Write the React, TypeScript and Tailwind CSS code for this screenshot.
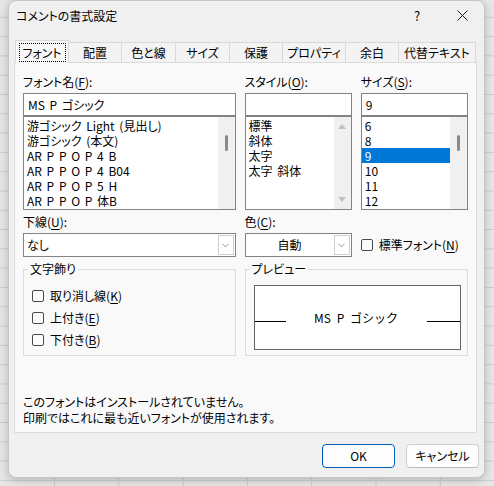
import { ChevronDown } from "lucide-react";

const tabs = [
  { label: "フォント", w: 54 },
  { label: "配置", w: 53 },
  { label: "色と線", w: 54 },
  { label: "サイズ", w: 54 },
  { label: "保護", w: 53 },
  { label: "プロパティ", w: 63 },
  { label: "余白", w: 53 },
  { label: "代替テキスト", w: 77 },
];

const fontNames = [
  "游ゴシック Light (見出し)",
  "游ゴシック (本文)",
  "AR P P O P 4 B",
  "AR P P O P 4 B04",
  "AR P P O P 5 H",
  "AR P P O P 体B",
];

const styles = ["標準", "斜体", "太字", "太字 斜体"];
const sizes = ["6", "8", "9", "10", "11", "12"];

function Key({ k }: { k: string }) {
  return <span className="underline underline-offset-[2px]">{k}</span>;
}

function Check({ children }: { children: React.ReactNode }) {
  return (
    <div className="flex items-center gap-[6px]">
      <span className="w-[12px] h-[12px] rounded-[2px] border border-[#4a4a4a] bg-[#fbfbfb]" />
      <span>{children}</span>
    </div>
  );
}

function Thumb() {
  return <div className="absolute left-[7px] top-[18px] w-[3px] h-[16px] rounded-full bg-[#8a8a8a]" />;
}

function ListBox({
  items,
  selected,
  thumb,
  arrows,
}: {
  items: string[];
  selected?: number;
  thumb?: boolean;
  arrows?: boolean;
}) {
  return (
    <div className="h-[94px] border border-[#838383] bg-white flex">
      <div className="flex-1 pt-[1px]">
        {items.map((it, i) => (
          <div
            key={it}
            className={`h-[15px] leading-[15px] pl-[3px] whitespace-nowrap [word-spacing:2px] ${
              i === selected ? "bg-[#0078d7] text-white" : ""
            }`}
          >
            {it}
          </div>
        ))}
      </div>
      <div className="relative w-[17px] bg-[#f0f0f0] flex flex-col items-center justify-between py-[7px]">
        {thumb && <Thumb />}
        {arrows && (
          <>
            <svg width="8" height="5" viewBox="0 0 8 5">
              <path d="M0 5 L4 0 L8 5 Z" fill="#c2c2c2" />
            </svg>
            <svg width="8" height="5" viewBox="0 0 8 5">
              <path d="M0 0 L4 5 L8 0 Z" fill="#c2c2c2" />
            </svg>
          </>
        )}
      </div>
    </div>
  );
}

function Combo({ text, center }: { text: string; center?: boolean }) {
  return (
    <div className="h-[24px] border border-[#838383] bg-white flex">
      <div className={`flex-1 leading-[22px] ${center ? "text-center" : "pl-[3px]"}`}>{text}</div>
      <div className="w-[16px] my-[1px] mr-[1px] border border-[#cfcfcf] flex items-center justify-center">
        <ChevronDown size={11} strokeWidth={1.4} color="#5a5a5a" />
      </div>
    </div>
  );
}

export default function App() {
  return (
    <div className="w-[494px] h-[486px] overflow-hidden bg-[#e7e7e7] [background-image:linear-gradient(to_right,#cdcdcd_1px,transparent_1px),linear-gradient(to_bottom,#cdcdcd_1px,transparent_1px)] [background-size:64.3px_19.3px] [background-position:54px_16.8px] font-['Noto_Sans_CJK_JP','Noto_Sans',sans-serif] [font-feature-settings:'palt'] text-[12px] text-black">
      <div className="ml-[8px] w-[477px] h-[478px] rounded-[8px] border border-[#c5c5c5] bg-[#f0f0f0] shadow-[0_2px_10px_rgba(0,0,0,0.22)] flex flex-col overflow-hidden">
        {/* title bar */}
        <div className="h-[29px] flex items-center">
          <div className="pl-[7px]">コメントの書式設定</div>
          <div className="ml-auto w-[46px] text-center text-[13px]">?</div>
          <div className="w-[44px] flex justify-center">
            <svg width="11" height="11" viewBox="0 0 11 11">
              <path d="M0.5 0.5 L10.5 10.5 M10.5 0.5 L0.5 10.5" stroke="#1a1a1a" strokeWidth="1" />
            </svg>
          </div>
        </div>

        {/* tabs */}
        <div className="mt-[10px] ml-[6px] h-[23px] mb-[-1px] relative z-10 flex items-start">
          {tabs.map((t, i) =>
            i === 0 ? (
              <div
                key={t.label}
                style={{ width: t.w }}
                className="h-[23px] border-l border-t border-r border-[#d9d9d9] bg-[#f9f9f9] flex items-start justify-center pt-[2px]"
              >
                <span className="w-[47px] h-[19px] border border-dotted border-black flex items-center justify-center">
                  {t.label}
                </span>
              </div>
            ) : (
              <div
                key={t.label}
                style={{ width: t.w }}
                className="mt-[2px] h-[20px] border-t border-r border-[#d9d9d9] bg-[#f3f3f3] flex items-center justify-center"
              >
                {t.label}
              </div>
            )
          )}
        </div>

        {/* panel */}
        <div className="ml-[5px] w-[463px] h-[371px] border border-[#dcdcdc] bg-[#f9f9f9] px-[8px] pt-[11px] flex flex-col">
          <div className="flex gap-[9px]">
            <div className="w-[214px]">
              <div className="h-[16px] leading-[16px]">
                フォント名(<Key k="F" />):
              </div>
              <div className="mt-[3px] h-[23px] border border-[#838383] bg-white pl-[4px] leading-[21px] [word-spacing:2px]">
                MS P ゴシック
              </div>
              <ListBox items={fontNames} thumb />
            </div>
            <div className="w-[108px]">
              <div className="h-[16px] leading-[16px]">
                スタイル(<Key k="O" />):
              </div>
              <div className="mt-[3px] h-[23px] border border-[#838383] bg-white" />
              <ListBox items={styles} arrows />
            </div>
            <div className="w-[108px]">
              <div className="h-[16px] leading-[16px]">
                サイズ(<Key k="S" />):
              </div>
              <div className="mt-[3px] h-[23px] border border-[#838383] bg-white pl-[4px] leading-[21px]">
                9
              </div>
              <ListBox items={sizes} selected={2} thumb />
            </div>
          </div>

          <div className="mt-[4px] flex gap-[9px]">
            <div className="w-[214px]">
              <div className="h-[16px] leading-[16px]">
                下線(<Key k="U" />):
              </div>
              <div className="mt-[3px]">
                <Combo text="なし" />
              </div>
            </div>
            <div className="w-[108px]">
              <div className="h-[16px] leading-[16px]">
                色(<Key k="C" />):
              </div>
              <div className="mt-[3px]">
                <Combo text="自動" center />
              </div>
            </div>
            <div className="w-[108px] mt-[19px] h-[24px] flex items-center">
              <Check>
                標準フォント(<Key k="N" />)
              </Check>
            </div>
          </div>

          <div className="mt-[4px] flex gap-[9px]">
            <fieldset className="w-[214px] h-[95px] border border-[#dcdcdc]">
              <legend className="ml-[4px] px-[2px] leading-[16px]">文字飾り</legend>
              <div className="mt-[8px] pl-[8px]">
                <div className="h-[22px] flex items-center">
                  <Check>
                    取り消し線(<Key k="K" />)
                  </Check>
                </div>
                <div className="h-[22px] flex items-center">
                  <Check>
                    上付き(<Key k="E" />)
                  </Check>
                </div>
                <div className="h-[22px] flex items-center">
                  <Check>
                    下付き(<Key k="B" />)
                  </Check>
                </div>
              </div>
            </fieldset>
            <fieldset className="w-[225px] h-[95px] border border-[#dcdcdc]">
              <legend className="ml-[4px] px-[2px] leading-[16px]">プレビュー</legend>
              <div className="mt-[8px] ml-[8px] w-[207px] h-[65px] border border-[#646464] bg-white flex items-center">
                <div className="w-[31px] h-px bg-black mt-[7px]" />
                <div className="flex-1 text-center [font-feature-settings:normal] [word-spacing:3px]">MS P ゴシック</div>
                <div className="w-[33px] h-px bg-black mt-[7px]" />
              </div>
            </fieldset>
          </div>

          <div className="mt-[38px] leading-[16px]">
            <div>このフォントはインストールされていません。</div>
            <div>印刷ではこれに最も近いフォントが使用されます。</div>
          </div>
        </div>

        {/* buttons */}
        <div className="mt-[11px] pr-[5px] flex justify-end gap-[11px]">
          <div className="w-[73px] h-[24px] rounded-[4px] border border-[#005fb8] bg-[#fdfdfd] flex items-center justify-center">
            OK
          </div>
          <div className="w-[73px] h-[24px] rounded-[4px] border border-[#d0d0d0] border-b-[#bcbcbc] bg-[#fdfdfd] flex items-center justify-center">
            キャンセル
          </div>
        </div>
      </div>
    </div>
  );
}
